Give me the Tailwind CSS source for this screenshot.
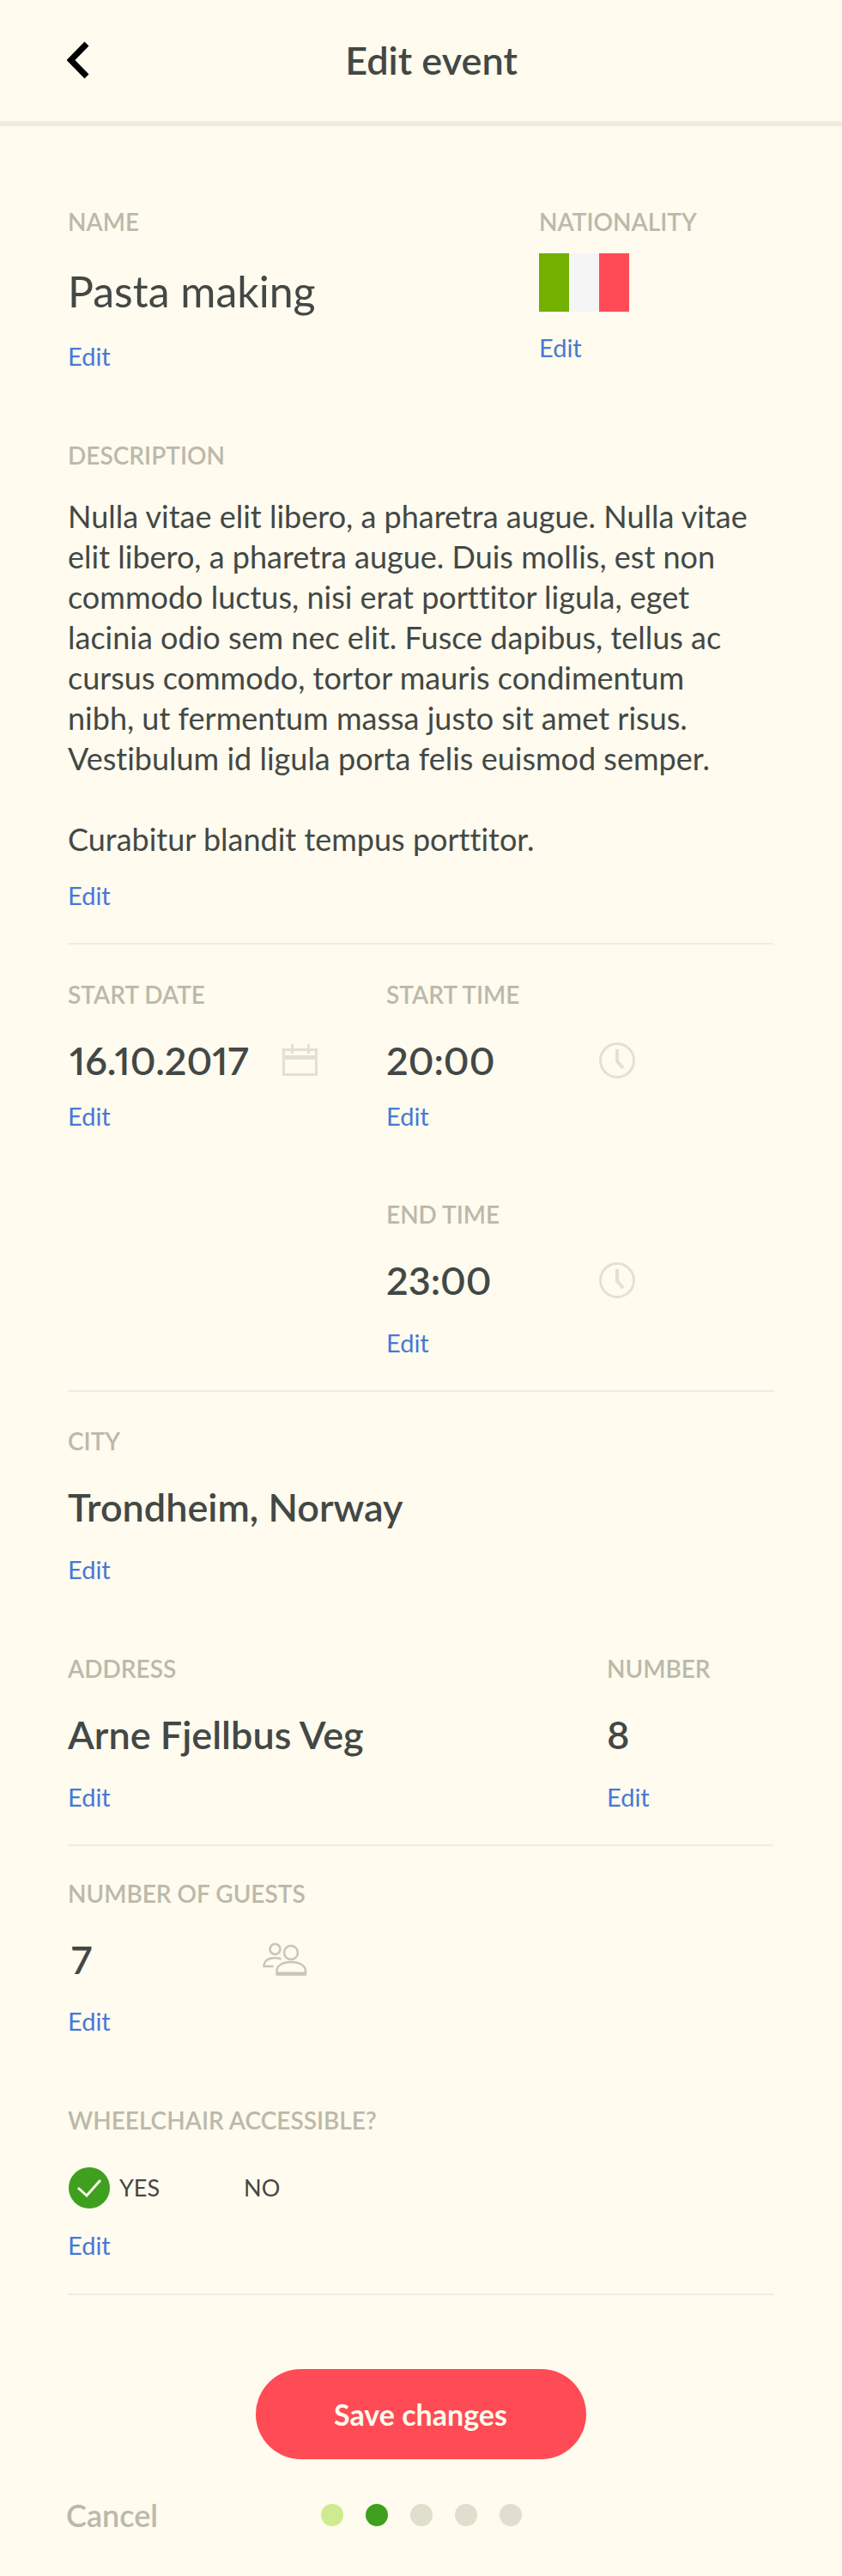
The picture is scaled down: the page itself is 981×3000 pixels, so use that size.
<!DOCTYPE html>
<html lang="en">
<head>
<meta charset="utf-8">
<meta name="viewport" content="width=device-width, initial-scale=1">
<title>Edit event</title>
<script src="https://cdn.jsdelivr.net/npm/@tailwindcss/browser@4"></script>
</head>
<body class="min-h-screen bg-[#fffbee] font-['Lato','Open_Sans',sans-serif] text-[#434846] proportional-nums [font-variant-ligatures:none]">
<header class="grid h-[147px] grid-cols-[1fr_auto_1fr] items-center border-b-[6px] border-[#f0edde] px-[78px] pb-0.5">
  <button type="button" aria-label="Back" class="justify-self-start">
    <svg class="h-11 w-[26px]" viewBox="0 0 26 44" fill="none" stroke="#000" stroke-width="7"><path d="M23 3 4.500 22 23 41"/></svg>
  </button>
  <h1 class="pl-6 text-[45px] leading-[56px] font-semibold">Edit event</h1>
</header>

<main class="pr-20 pl-[79px] pt-[95px]">
  <section class="grid grid-cols-[549fr_273fr]">
    <div>
      <h2 class="text-[28px] leading-8 font-semibold text-[#bbb9aa]">NAME</h2>
      <p class="mt-[35px] text-[50px] leading-[60px]">Pasta making</p>
      <a href="#name" class="mt-[30px] block w-fit text-[29px] leading-8 text-[#4778d6]">Edit</a>
    </div>
    <div>
      <h2 class="text-[28px] leading-8 font-semibold text-[#bbb9aa]">NATIONALITY</h2>
      <div role="img" aria-label="Italy" class="mt-[21px] grid h-[68px] w-[105px] grid-cols-3">
        <span class="bg-[#73b000]"></span><span class="bg-[#f5f5f5]"></span><span class="bg-[#ff4b55]"></span>
      </div>
      <a href="#nationality" class="mt-[26px] block w-fit text-[29px] leading-8 text-[#4778d6]">Edit</a>
    </div>
  </section>

  <section class="mt-[83px] border-b-2 border-[#eeece6] pb-[39px]">
    <h2 class="text-[28px] leading-8 font-semibold text-[#bbb9aa]">DESCRIPTION</h2>
    <div class="mt-8 text-[36px] leading-[47px]">
      <p>Nulla vitae elit libero, a pharetra augue. Nulla vitae<br>elit libero, a pharetra augue. Duis mollis, est non<br>commodo luctus, nisi erat porttitor ligula, eget<br>lacinia odio sem nec elit. Fusce dapibus, tellus ac<br>cursus commodo, tortor mauris condimentum<br>nibh, ut fermentum massa justo sit amet risus.<br>Vestibulum id ligula porta felis euismod semper.</p>
      <p class="mt-[47px]">Curabitur blandit tempus porttitor.</p>
    </div>
    <a href="#description" class="mt-[26px] block w-fit text-[29px] leading-8 text-[#4778d6]">Edit</a>
  </section>

  <section class="grid grid-cols-[371fr_451fr] gap-y-[82px] border-b-2 border-[#eeece6] pt-[42px] pb-[39px]">
    <div>
      <h2 class="text-[28px] leading-8 font-semibold text-[#bbb9aa]">START DATE</h2>
      <div class="mt-[33px] flex items-center">
        <p class="w-[249px] pl-0.5 text-[45px] leading-[56px] font-semibold">16.10.2017</p>
        <svg class="size-[44px]" viewBox="0 0 44 44" fill="none" stroke="#e3e1d0" stroke-width="3"><path d="M2.500 9.500h38v29h-38z"/><path stroke-width="5" d="M2 18.500h39"/><path d="M12.500 3v11M31.500 3v11"/></svg>
      </div>
      <a href="#start-date" class="mt-[21px] block w-fit text-[29px] leading-8 text-[#4778d6]">Edit</a>
    </div>
    <div>
      <h2 class="text-[28px] leading-8 font-semibold text-[#bbb9aa]">START TIME</h2>
      <div class="mt-[33px] flex items-center">
        <p class="w-[248px] text-[45px] leading-[56px] font-semibold">20:00</p>
        <svg class="size-[42px]" viewBox="0 0 42 42" fill="none" stroke="#e3e1d0" stroke-width="3"><circle cx="21" cy="21" r="19.500"/><path stroke-width="4" d="M21 8v14l7 8"/></svg>
      </div>
      <a href="#start-time" class="mt-[21px] block w-fit text-[29px] leading-8 text-[#4778d6]">Edit</a>
    </div>
    <div class="col-start-2">
      <h2 class="text-[28px] leading-8 font-semibold text-[#bbb9aa]">END TIME</h2>
      <div class="mt-[33px] flex items-center">
        <p class="w-[248px] text-[45px] leading-[56px] font-semibold">23:00</p>
        <svg class="size-[42px]" viewBox="0 0 42 42" fill="none" stroke="#e3e1d0" stroke-width="3"><circle cx="21" cy="21" r="19.500"/><path stroke-width="4" d="M21 8v14l7 8"/></svg>
      </div>
      <a href="#end-time" class="mt-[29px] block w-fit text-[29px] leading-8 text-[#4778d6]">Edit</a>
    </div>
  </section>

  <section class="grid grid-cols-[628fr_194fr] gap-y-[83px] border-b-2 border-[#eeece6] pt-[41px] pb-[39px]">
    <div class="col-span-2">
      <h2 class="text-[28px] leading-8 font-semibold text-[#bbb9aa]">CITY</h2>
      <p class="mt-[33px] text-[45px] leading-[56px] font-semibold">Trondheim, Norway</p>
      <a href="#city" class="mt-[29px] block w-fit text-[29px] leading-8 text-[#4778d6]">Edit</a>
    </div>
    <div>
      <h2 class="text-[28px] leading-8 font-semibold text-[#bbb9aa]">ADDRESS</h2>
      <p class="mt-[33px] text-[45px] leading-[56px] font-semibold">Arne Fjellbus Veg</p>
      <a href="#address" class="mt-[29px] block w-fit text-[29px] leading-8 text-[#4778d6]">Edit</a>
    </div>
    <div>
      <h2 class="text-[28px] leading-8 font-semibold text-[#bbb9aa]">NUMBER</h2>
      <p class="mt-[33px] text-[45px] leading-[56px] font-semibold">8</p>
      <a href="#number" class="mt-[29px] block w-fit text-[29px] leading-8 text-[#4778d6]">Edit</a>
    </div>
  </section>

  <section class="border-b-2 border-[#eeece6] pt-[39px] pb-10">
    <h2 class="text-[28px] leading-8 font-semibold text-[#bbb9aa]">NUMBER OF GUESTS</h2>
    <div class="mt-[33px] flex items-center">
      <p class="w-[227px] pl-1 text-[45px] leading-[56px] font-semibold">7</p>
      <svg class="h-10 w-[52px]" viewBox="0 0 52 40" fill="none" stroke="#c8c6b8" stroke-width="2.500"><circle cx="14.500" cy="8" r="6"/><circle cx="33" cy="12" r="8"/><path d="M21.500 19.500c-3-1.200-6-1.500-9-1.200C6 18.800 1.500 21 1.500 28h11"/><path d="M16.500 37.500v-4c0-6 6-10.500 16.500-10.500s17 4.500 17 10.500v4z"/><path stroke-width="4" d="M16 36.500h34"/></svg>
    </div>
    <a href="#guests" class="mt-7 block w-fit text-[29px] leading-8 text-[#4778d6]">Edit</a>

    <fieldset class="mt-[83px]">
      <legend class="text-[28px] leading-8 font-semibold text-[#bbb9aa]">WHEELCHAIR ACCESSIBLE?</legend>
      <div class="mt-[39px] flex gap-[39px] pl-px text-[27px] leading-8">
        <label class="flex items-center gap-[11px]">
          <input type="radio" name="wheelchair" value="yes" checked class="peer sr-only">
          <svg class="size-12 opacity-0 peer-checked:opacity-100" viewBox="0 0 48 48" fill="none"><circle cx="24" cy="24" r="24" fill="#3ea01e"/><path stroke="#fffbee" stroke-width="3" d="m11 24 10 9 16-18"/></svg>
          YES
        </label>
        <label class="flex items-center gap-[11px]">
          <input type="radio" name="wheelchair" value="no" class="peer sr-only">
          <svg class="size-12 opacity-0 peer-checked:opacity-100" viewBox="0 0 48 48" fill="none"><circle cx="24" cy="24" r="24" fill="#3ea01e"/><path stroke="#fffbee" stroke-width="3" d="m11 24 10 9 16-18"/></svg>
          NO
        </label>
      </div>
    </fieldset>
    <a href="#wheelchair" class="mt-[27px] block w-fit text-[29px] leading-8 text-[#4778d6]">Edit</a>
  </section>

  <button type="submit" class="mx-auto mt-[86px] block h-[105px] w-[385px] rounded-full bg-[#ff4b55] text-[34px] leading-[42px] font-bold text-[#fffbee]">Save changes</button>
</main>

<footer class="grid grid-cols-[1fr_auto_1fr] items-center px-[77px] pt-11 pb-11">
  <button type="button" class="justify-self-start text-[36px] leading-[42px] font-semibold text-[#bbb9aa]">Cancel</button>
  <ol aria-label="Step 2 of 5" class="flex gap-[26px]">
    <li class="size-[26px] rounded-full bg-[#cdec8f]"></li>
    <li aria-current="step" class="size-[26px] rounded-full bg-[#3ea01e]"></li>
    <li class="size-[26px] rounded-full bg-[#e0decd]"></li>
    <li class="size-[26px] rounded-full bg-[#e0decd]"></li>
    <li class="size-[26px] rounded-full bg-[#e0decd]"></li>
  </ol>
</footer>
</body>
</html>
